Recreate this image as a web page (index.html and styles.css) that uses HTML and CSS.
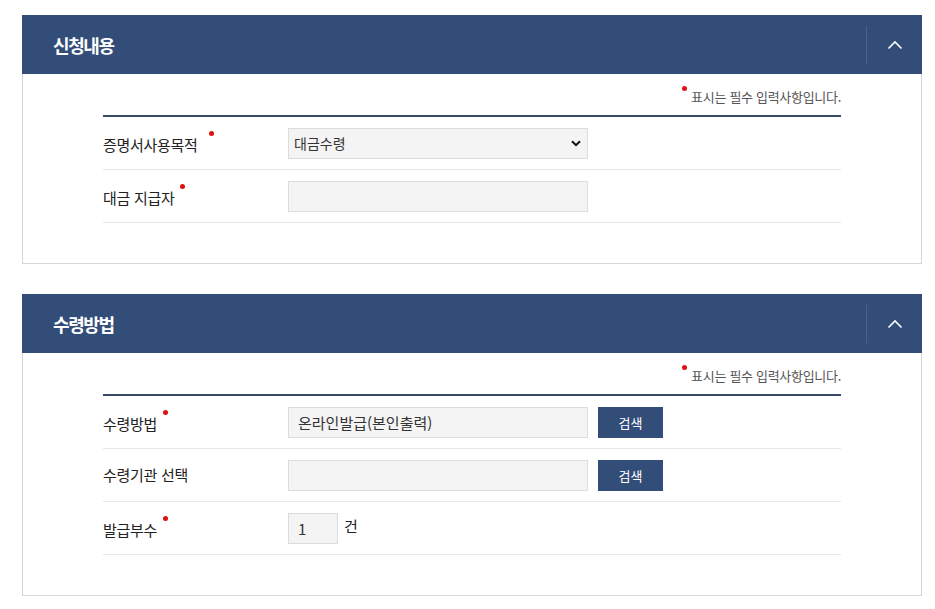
FILE: index.html
```html
<!DOCTYPE html>
<html lang="ko">
<head>
<meta charset="utf-8">
<link rel="stylesheet" href="styles.css">
</head>
<body>
<div class="page">
  <section class="panel">
    <div class="panel-head">
      <h2 class="panel-title">신청내용</h2>
      <button class="toggle" type="button" aria-label="접기">
        <svg width="16" height="10" viewBox="0 0 16 10"><path d="M1.5 8.5 L8 2 L14.5 8.5" fill="none" stroke="#fff" stroke-width="1.6"/></svg>
      </button>
    </div>
    <div class="panel-body">
      <p class="notice"><span class="req"></span>표시는 필수 입력사항입니다.</p>
      <div class="form">
        <div class="row">
          <div class="label">증명서사용목적<span class="req req-far"></span></div>
          <div class="field">
            <select class="select"><option>대금수령</option></select>
          </div>
        </div>
        <div class="row">
          <div class="label">대금 지급자<span class="req"></span></div>
          <div class="field"><input class="input" type="text"></div>
        </div>
      </div>
    </div>
  </section>

  <section class="panel">
    <div class="panel-head">
      <h2 class="panel-title">수령방법</h2>
      <button class="toggle" type="button" aria-label="접기">
        <svg width="16" height="10" viewBox="0 0 16 10"><path d="M1.5 8.5 L8 2 L14.5 8.5" fill="none" stroke="#fff" stroke-width="1.6"/></svg>
      </button>
    </div>
    <div class="panel-body">
      <p class="notice"><span class="req"></span>표시는 필수 입력사항입니다.</p>
      <div class="form">
        <div class="row">
          <div class="label">수령방법<span class="req"></span></div>
          <div class="field">
            <input class="input" type="text" value="온라인발급(본인출력)">
            <button class="btn" type="button">검색</button>
          </div>
        </div>
        <div class="row">
          <div class="label">수령기관 선택</div>
          <div class="field">
            <input class="input" type="text">
            <button class="btn" type="button">검색</button>
          </div>
        </div>
        <div class="row">
          <div class="label">발급부수<span class="req"></span></div>
          <div class="field">
            <input class="input qty" type="text" value="1">
            <span class="unit">건</span>
          </div>
        </div>
      </div>
    </div>
  </section>
</div>
</body>
</html>
```

FILE: styles.css
```css
* { box-sizing: border-box; }
html, body { margin: 0; padding: 0; background: #fff; }
body {
  font-family: "Noto Sans CJK KR", "Noto Sans", sans-serif;
  color: #333;
}
.page {
  padding: 15px 0 0 22px;
  width: 922px;
  display: flex;
  flex-direction: column;
  gap: 30px;
}
.panel {
  width: 900px;
  border: 1px solid #d6d6d6;
  border-top: 0;
}
.panel-head {
  height: 59px;
  background: #334d79;
  margin: 0 -1px;
  display: flex;
  align-items: center;
  justify-content: space-between;
  padding-left: 31px;
}
.panel-title {
  margin: 0;
  color: #fff;
  font-size: 18px;
  font-weight: 700;
  letter-spacing: -1.4px;
  line-height: 24px;
}
.toggle {
  width: 56px;
  height: 38px;
  border: 0;
  border-left: 1px solid rgba(255,255,255,0.12);
  background: transparent;
  padding: 0;
  display: flex;
  align-items: center;
  justify-content: center;
  cursor: pointer;
}
.panel-body {
  padding: 12px 80px 40px 80px;
}
.notice {
  margin: 0 0 8px;
  text-align: right;
  font-size: 13px;
  line-height: 20px;
  color: #555;
  letter-spacing: -0.3px;
}
.req {
  display: inline-block;
  width: 5px;
  height: 5px;
  border-radius: 50%;
  background: #e01010;
  vertical-align: 11px;
  margin-right: 4px;
}
.form {
  border-top: 2px solid #3a4964;
}
.row {
  display: flex;
  align-items: center;
  height: 53px;
  border-bottom: 1px solid #e6e6e6;
}
.label {
  width: 185px;
  font-size: 15px;
  color: #222;
  letter-spacing: -0.3px;
  line-height: 22px;
}
.label .req {
  margin-left: 6px;
  margin-right: 0;
  vertical-align: 15px;
}
.label .req-far { margin-left: 11px; }
.field {
  display: flex;
  align-items: center;
}
.input, .select {
  width: 300px;
  height: 31px;
  border: 1px solid #dcdcdc;
  background: #f4f4f4;
  font-family: "Noto Sans CJK KR", "Noto Sans", sans-serif;
  font-size: 15px;
  color: #333;
  padding: 0 9px;
  outline: none;
  border-radius: 0;
}
.select {
  font-size: 14px;
  padding: 0 5px;
  appearance: none;
  -webkit-appearance: none;
  background-image: url("data:image/svg+xml;utf8,<svg xmlns='http://www.w3.org/2000/svg' width='10' height='7' viewBox='0 0 10 7'><path d='M1 1.2 L5 5.2 L9 1.2' fill='none' stroke='%23111' stroke-width='2'/></svg>");
  background-repeat: no-repeat;
  background-position: right 6px center;
}
.qty { width: 50px; }
.btn {
  margin-left: 10px;
  width: 65px;
  height: 31px;
  border: 0;
  background: #334d79;
  color: #fff;
  font-family: "Noto Sans CJK KR", "Noto Sans", sans-serif;
  font-size: 13px;
  padding: 0;
  cursor: pointer;
}
.unit {
  margin-left: 6px;
  font-size: 15px;
  color: #222;
  align-self: flex-start;
  line-height: 26px;
}
```
